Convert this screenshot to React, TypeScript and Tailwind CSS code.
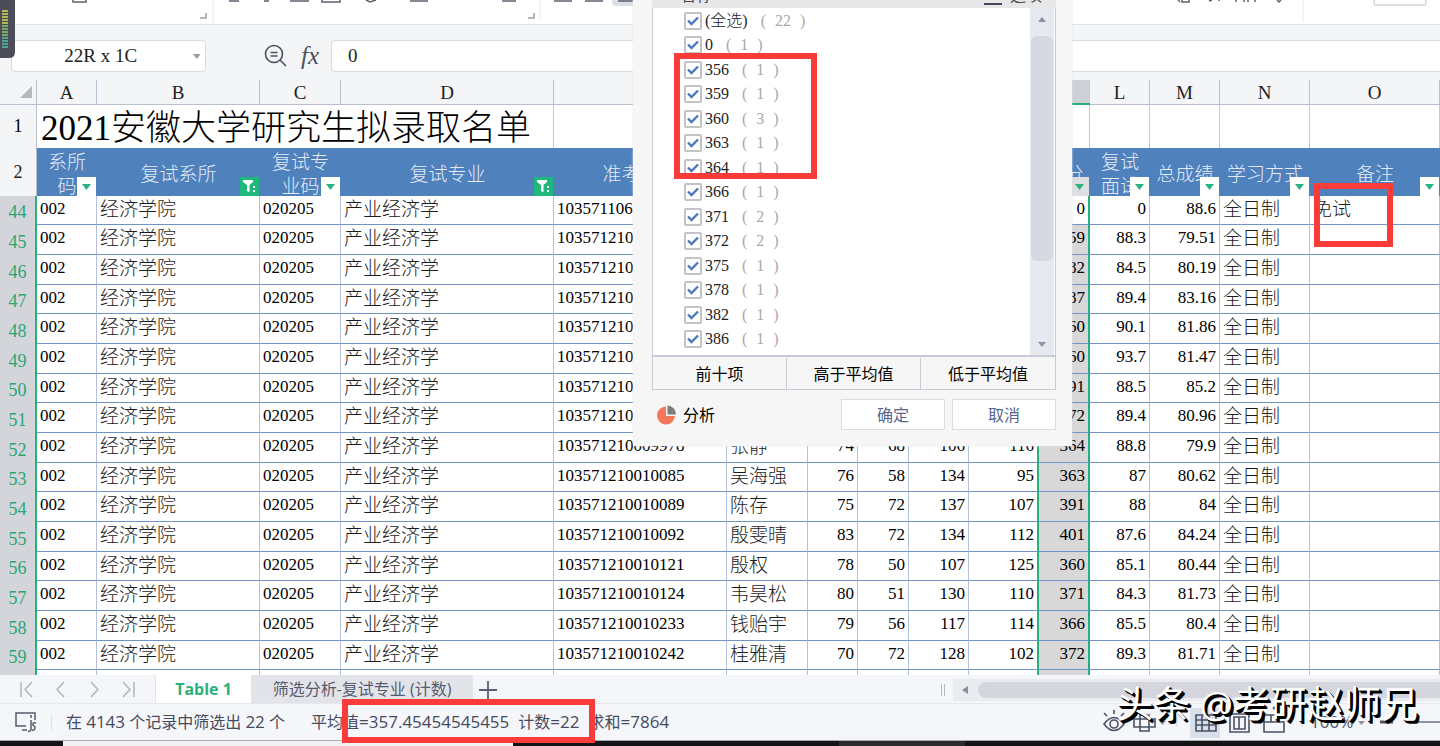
import type { ReactNode } from 'react';
import clsx from 'clsx';

type Column = {
  letter: string;
  width: string;
  title?: string[];
  filter?: 'plain' | 'active';
};

const columns: Column[] = [
  { letter: 'A', width: 'w-[60px]', title: ['系所', '码'], filter: 'plain' },
  { letter: 'B', width: 'w-[163px]', title: ['复试系所'], filter: 'active' },
  { letter: 'C', width: 'w-[81px]', title: ['复试专', '业码'], filter: 'plain' },
  { letter: 'D', width: 'w-[213px]', title: ['复试专业'], filter: 'active' },
  { letter: 'E', width: 'w-[173px]', title: ['准考证号'] },
  { letter: 'F', width: 'w-[81px]' },
  { letter: 'G', width: 'w-[50px]' },
  { letter: 'H', width: 'w-[51px]' },
  { letter: 'I', width: 'w-[60px]' },
  { letter: 'J', width: 'w-[70px]' },
  { letter: 'K', width: 'w-[51px]', title: ['总分'], filter: 'plain' },
  { letter: 'L', width: 'w-[60px]', title: ['复试', '面试'], filter: 'plain' },
  { letter: 'M', width: 'w-[70px]', title: ['总成绩'], filter: 'plain' },
  { letter: 'N', width: 'w-[90px]', title: ['学习方式'], filter: 'plain' },
  { letter: 'O', width: '', title: ['备注'], filter: 'plain' },
];

// row, exam id, name, four papers, total, interview, final score
const records = [
  [44, '103571106', '', '', '', '', '', '0', '0', '88.6'],
  [45, '103571210', '', '', '', '', '', '359', '88.3', '79.51'],
  [46, '103571210', '', '', '', '', '', '382', '84.5', '80.19'],
  [47, '103571210', '', '', '', '', '', '387', '89.4', '83.16'],
  [48, '103571210', '', '', '', '', '', '360', '90.1', '81.86'],
  [49, '103571210', '', '', '', '', '', '360', '93.7', '81.47'],
  [50, '103571210', '', '', '', '', '', '391', '88.5', '85.2'],
  [51, '103571210', '', '', '', '', '', '372', '89.4', '80.96'],
  [52, '103571210009978', '张静', '74', '68', '106', '116', '364', '88.8', '79.9'],
  [53, '103571210010085', '吴海强', '76', '58', '134', '95', '363', '87', '80.62'],
  [54, '103571210010089', '陈存', '75', '72', '137', '107', '391', '88', '84'],
  [55, '103571210010092', '殷雯晴', '83', '72', '134', '112', '401', '87.6', '84.24'],
  [56, '103571210010121', '殷权', '78', '50', '107', '125', '360', '85.1', '80.44'],
  [57, '103571210010124', '韦昊松', '80', '51', '130', '110', '371', '84.3', '81.73'],
  [58, '103571210010233', '钱贻宇', '79', '56', '117', '114', '366', '85.5', '80.4'],
  [59, '103571210010242', '桂雅清', '70', '72', '128', '102', '372', '89.3', '81.71'],
];

const filterItems = [
  ['(全选)', 22],
  ['0', 1],
  ['356', 1],
  ['359', 1],
  ['360', 3],
  ['363', 1],
  ['364', 1],
  ['366', 1],
  ['371', 2],
  ['372', 2],
  ['375', 1],
  ['378', 1],
  ['382', 1],
  ['386', 1],
] as const;

function Ribbon() {
  return (
    <div className="h-[25px] border-b border-[#e2e3e6] bg-white">
      <svg width="1440" height="24" fill="none" stroke="#5d6170" strokeWidth="1.5" aria-hidden="true">
        <path d="M73 0v2h13V0M229 1h10M264 1h5M290 1h19M322 0v2h18V0M366 0l4 2 6-2M410 1h18M502 1h14M554 1h18M585 1h18" />
        <path d="M206 13v5h-6M534 13v5h-6" stroke="#a0a3ad" />
        <path d="M213 0v24M540 0v20M1303 0v22" stroke="#e9eaed" strokeWidth="1" />
        <path d="M612 0h24v6h-20q-4 0-4-4z" fill="#dcdfe8" stroke="none" />
        <path d="M618 1h16" />
        <path d="M1178 0l2 2M1182 0v2h7V0M1209 1l3-1M1219 0v1M1236 0v2M1244 0v2M1248 0v2M1255 0v2M1277 0l2 2 2-2" />
        <path d="M1374 0v3q0 2 2 2h48q2 0 2-2V0" stroke="#dddfe3" strokeWidth="2" />
      </svg>
    </div>
  );
}

function FormulaBar() {
  return (
    <div className="flex h-[55px] items-start bg-[#f4f5f7] pt-[15px] pl-[11px] font-['Liberation_Serif','Noto_Sans_CJK_SC',serif]">
      <div className="flex h-8 w-[195px] items-center rounded-sm border border-[#d8dae0] bg-white pr-1">
        <input
          aria-label="名称框"
          defaultValue="22R x 1C"
          className="w-full min-w-0 bg-transparent pr-1 text-center text-[19px] leading-6 text-[#222] outline-none"
        />
        <svg width="8" height="5" viewBox="0 0 8 5" aria-hidden="true">
          <path d="M0 0h8L4 5z" fill="#9a9da8" />
        </svg>
      </div>
      <button aria-label="查找" className="mt-1 ml-[58px]">
        <svg width="24" height="24" viewBox="0 0 24 24" fill="none" stroke="#4c5060" strokeWidth="1.6">
          <circle cx="10" cy="10" r="8.5" />
          <path d="M16 16l6 6M6.500 8.500h7M6.500 12h7" />
        </svg>
      </button>
      <button aria-label="插入函数" className="ml-2 w-7 text-[25px] leading-8 text-[#4c5060] italic">
        fx
      </button>
      <input
        aria-label="编辑栏"
        defaultValue="0"
        className="ml-[7px] h-8 min-w-0 flex-1 rounded-l-sm border border-r-0 border-[#d8dae0] bg-white pl-4 text-[19px] text-[#222] outline-none"
      />
    </div>
  );
}

function FilterButton({ kind, column }: { kind: 'plain' | 'active'; column: string }) {
  return (
    <button
      aria-label={`筛选 ${column}`}
      className={clsx(
        'absolute right-px bottom-0 grid size-[19px] place-items-center',
        kind === 'active' ? 'bg-[#1fb87b]' : column === 'K' ? 'bg-[#dedfe2]' : 'bg-white'
      )}
    >
      {kind === 'active' ? (
        <svg width="15" height="13" viewBox="0 0 15 13" fill="#fff">
          <path d="M1 0h10v2L7.500 5v7.500L5 11V5L1 2z" />
          <path d="M11 6h2v2h-2zM11 10h2v2h-2z" />
        </svg>
      ) : (
        <svg width="9" height="6" viewBox="0 0 9 6" fill="#2ab37d">
          <path d="M0 0h9L4.500 6z" />
        </svg>
      )}
    </button>
  );
}

function Cell({ children, zh, right, className }: { children?: ReactNode; zh?: boolean; right?: boolean; className?: string }) {
  return (
    <td
      className={clsx(
        'overflow-hidden border-b border-b-[#6f93c4] px-[3px] align-top whitespace-nowrap',
        zh ? 'text-[19px] leading-7 font-light text-[#1c1c1c]' : 'text-[17px] leading-[25px]',
        right && 'text-right',
        className ?? 'border-r border-r-[#b4c0dc]'
      )}
    >
      {children}
    </td>
  );
}

function Sheet() {
  return (
    <table className="w-full table-fixed border-separate border-spacing-0 bg-white font-['Liberation_Serif','Noto_Sans_CJK_SC',serif] text-black">
      <colgroup>
        <col className="w-[37px]" />
        {columns.map((c) => (
          <col key={c.letter} className={c.width} />
        ))}
      </colgroup>
      <thead>
        <tr className="h-[25px] bg-[#f4f5f7] text-[19px] leading-[22px] text-[#222]">
          <th className="border-r border-b border-[#b9bfce] p-0">
            <svg className="mr-1 ml-auto" width="12" height="12" aria-label="全选">
              <path d="M12 0v12H0z" fill="#b7b9bd" />
            </svg>
          </th>
          {columns.map((c) => (
            <th
              key={c.letter}
              scope="col"
              className={clsx(
                'p-0 pt-px font-normal',
                c.letter === 'K' ? 'border-b-2 border-[#27b07a] bg-[#cdd0d6]' : 'border-r border-b border-[#b9bfce]'
              )}
            >
              {c.letter}
            </th>
          ))}
        </tr>
      </thead>
      <tbody>
        <tr className="h-[43px]">
          <th scope="row" className="border-r border-[#b9bfce] bg-[#f4f5f7] p-0 text-[18px] font-normal">
            1
          </th>
          <td
            colSpan={4}
            className="border-r border-[#c3cad9] pt-1 pl-1 text-[35px] leading-[38px] font-light whitespace-nowrap"
          >
            2021安徽大学研究生拟录取名单
          </td>
          {columns.slice(4).map((c) => (
            <td key={c.letter} className="border-r border-[#c3c8de]" />
          ))}
        </tr>
        <tr className="h-12 bg-[#4f81bd] text-[19px] leading-6 text-[#e3ebf7]">
          <th scope="row" className="border-r border-[#b9bfce] bg-[#f4f5f7] p-0 text-[18px] font-normal text-[#222]">
            2
          </th>
          {columns.map((c) => (
            <th key={c.letter} className="relative p-0 font-light whitespace-nowrap">
              <div className={clsx('h-12', c.title && c.title.length > 1 ? 'pt-[3px]' : 'pt-[15px]')}>
                {c.title?.map((line) => (
                  <div key={line}>{line}</div>
                ))}
              </div>
              {c.filter && <FilterButton kind={c.filter} column={c.letter} />}
            </th>
          ))}
        </tr>
        {records.map(([row, id, name, p1, p2, p3, p4, total, interview, final], i) => (
          <tr key={row} className={i % 3 === 0 ? 'h-[29px]' : 'h-[30px]'}>
            <th
              scope="row"
              className="border-r-2 border-[#27b07a] bg-[#d3d5da] p-0 align-bottom text-[18px] leading-[25px] font-normal text-[#2ba575]"
            >
              {row}
            </th>
            <Cell>002</Cell>
            <Cell zh>经济学院</Cell>
            <Cell>020205</Cell>
            <Cell zh>产业经济学</Cell>
            <Cell>{id}</Cell>
            <Cell zh>{name}</Cell>
            <Cell right>{p1}</Cell>
            <Cell right>{p2}</Cell>
            <Cell right>{p3}</Cell>
            <Cell right className="border-r-2 border-r-[#27b07a]">{p4}</Cell>
            <Cell right className={clsx('border-r-2 border-r-[#27b07a]', i > 0 && 'bg-[#d8d8d9]')}>{total}</Cell>
            <Cell right>{interview}</Cell>
            <Cell right>{final}</Cell>
            <Cell zh>全日制</Cell>
            <Cell zh>{i === 0 && '免试'}</Cell>
          </tr>
        ))}
        <tr className="h-[5px]">
          <th className="border-r-2 border-[#27b07a] bg-[#d3d5da] p-0" />
          {columns.map((c) => (
            <td
              key={c.letter}
              className={clsx(
                'p-0',
                c.letter === 'J' || c.letter === 'K' ? 'border-r-2 border-[#27b07a]' : 'border-r border-[#b4c0dc]',
                c.letter === 'K' && 'bg-[#d8d8d9]'
              )}
            />
          ))}
        </tr>
      </tbody>
    </table>
  );
}

function FilterPanel() {
  return (
    <section className="absolute top-0 left-[633px] w-[439px] bg-[#f6f6f6] pr-4 pb-4 pl-[19px] font-['Open_Sans','Noto_Sans_CJK_SC',sans-serif] shadow-[0_0_2px_#e4e4e8]">
      <div className="flex h-2 items-end justify-between overflow-hidden bg-[#e7e7e8] pr-[14px] pb-[3px] pl-7 text-base leading-5 text-[#444858]">
        <span>名称</span>
        <span className="flex items-end gap-2">
          <svg width="18" height="12" stroke="currentColor" strokeWidth="2" aria-hidden="true">
            <path d="M0 5h18M0 11h18" />
          </svg>
          选项
        </span>
      </div>
      <div className="flex h-[349px] border-x border-b-2 border-[#c8cbd5] bg-white">
        <ul className="flex-1 pt-px pl-[31px] font-['Liberation_Serif','Noto_Sans_CJK_SC',serif] text-base text-[#222]">
          {filterItems.map(([label, count]) => (
            <li key={label} className="h-6 even:h-[25px]">
              <label className="flex h-6 items-center">
                <span className="grid size-[18px] place-items-center">
                  <input
                    type="checkbox"
                    defaultChecked
                    className="col-start-1 row-start-1 size-[18px] appearance-none rounded-xs border-2 border-[#c4c4c6] bg-white"
                  />
                  <svg className="pointer-events-none col-start-1 row-start-1" width="12" height="10" viewBox="0 0 12 10" fill="none" stroke="#4a78c0" strokeWidth="2.4" aria-hidden="true">
                    <path d="M1 4.500l3.500 3.500L11 1.500" />
                  </svg>
                </span>
                <span className="ml-[3px] font-light">{label}</span>
                <span className="ml-[13px] flex gap-[9px] text-[#a9a9ad]">
                  <span>(</span>
                  <span>{count}</span>
                  <span>)</span>
                </span>
              </label>
            </li>
          ))}
        </ul>
        <div className="mr-px flex w-6 flex-col items-center bg-[#e7e9f0] pt-[9px] pb-2">
          <svg width="8" height="5" className="mb-[14px]" aria-hidden="true">
            <path d="M0 5h8L4 0z" fill="#8e92a1" />
          </svg>
          <div className="h-[225px] w-[22px] rounded-md bg-[#d6d9e2]" />
          <svg width="8" height="5" className="mt-auto" aria-hidden="true">
            <path d="M0 0h8L4 5z" fill="#8e92a1" />
          </svg>
        </div>
      </div>
      <div className="grid h-[33px] grid-cols-3 divide-x divide-[#c8cbd5] border border-t-0 border-[#c8cbd5] pt-px text-base text-black">
        <button>前十项</button>
        <button>高于平均值</button>
        <button>低于平均值</button>
      </div>
      <div className="mt-[9px] flex items-center text-base">
        <button className="flex items-center gap-[6px] pl-[5px] text-black">
          <svg width="20" height="20" viewBox="0 0 20 20" aria-hidden="true">
            <path d="M9 1.500A9 9 0 1 0 18 11H9z" fill="#f4775c" />
            <path d="M10.500 0.500a9 9 0 0 1 8.500 9h-8.500z" fill="#7d7d7b" />
          </svg>
          分析
        </button>
        <button className="ml-auto h-[31px] w-[104px] border border-[#dcdde1] bg-white text-[#56668c]">确定</button>
        <button className="ml-[7px] h-[31px] w-[104px] border border-[#dcdde1] bg-white text-[#56668c]">取消</button>
      </div>
    </section>
  );
}

function SheetTabs() {
  const arrows = ['M2 1v15M13 1L6 8.500l7 7.500', 'M11 1L4 8.500l7 7.500', 'M4 1l7 7.500L4 16', 'M2 1l7 7.500L2 16M13 1v15'];
  const names = ['第一张', '上一张', '下一张', '最后一张'];
  return (
    <div className="flex h-[29px] items-start border-b border-[#e6e8ee] bg-[#f5f6f9] text-base text-[#555b70]">
      <nav className="flex h-7 w-[155px] items-center gap-[19px] pl-[19px]">
        {arrows.map((d, i) => (
          <button key={d} aria-label={names[i]}>
            <svg width="15" height="17" fill="none" stroke="#b2b5bf" strokeWidth="1.5">
              <path d={d} />
            </svg>
          </button>
        ))}
      </nav>
      <button className="h-7 w-24 border-l border-[#e3e4e8] bg-white font-bold text-[#2bb07c]">Table 1</button>
      <button className="h-7 w-[222px] bg-[#e3e4ea] whitespace-nowrap">筛选分析-复试专业 (计数)</button>
      <button aria-label="新建工作表" className="mt-[6px] ml-[6px]">
        <svg width="18" height="18" stroke="#5a6074" strokeWidth="1.800">
          <path d="M9 0v18M0 9h18" />
        </svg>
      </button>
      <div className="mt-1 ml-auto flex h-[22px] w-[499px] items-center">
        <div className="mr-2 h-3 w-1 border-x border-[#b7bac4]" />
        <div className="flex h-full flex-1 items-center bg-[#eaebef]">
          <svg className="mx-[9px]" width="7" height="8" aria-hidden="true">
            <path d="M6 0v8L0 4z" fill="#8c8fa0" />
          </svg>
          <div className="h-4 flex-1 rounded-l-lg bg-[#d4d5dd]" />
        </div>
      </div>
    </div>
  );
}

function Num({ children }: { children: ReactNode }) {
  return <span className="text-[17px]">{children}</span>;
}

function StatusBar() {
  return (
    <footer className="flex h-9 items-center bg-[#f5f6f9] pl-[15px] text-base whitespace-nowrap text-[#454b5e]">
      <svg width="22" height="22" viewBox="0 0 22 22" fill="none" stroke="#555b6d" strokeWidth="1.500" aria-hidden="true">
        <path d="M11 15H1V2h19v4M7 19h5M16 9v9q0 3-3 2M21 12q-4-1-3 2l2 2q0 4-3 3M16 7V4M20 5v4" />
      </svg>
      <div className="ml-[14px] h-4 w-px bg-[#dfe1e6]" />
      <span className="ml-[14px]">
        在 <Num>4143</Num> 个记录中筛选出 <Num>22</Num> 个
      </span>
      <div className="ml-[26px] flex items-center gap-[9px]">
        <span>
          平均值<Num>=357.45454545455</Num>
        </span>
        <span>
          计数<Num>=22</Num>
        </span>
        <span>
          求和<Num>=7864</Num>
        </span>
      </div>
      <div className="ml-auto flex h-full shrink-0 items-center text-[#4b5165]">
        <svg width="207" height="36" fill="none" stroke="currentColor" strokeWidth="1.600" aria-hidden="true">
          <path d="M87 4h30v30H87z" fill="#dae0e9" stroke="none" />
          <path d="M1 20q10-13 20 0q-10 13-20 0zM1 9l3 3M11 6v4M21 9l-3 3" />
          <circle cx="11" cy="20" r="4" />
          <path d="M31 15h21v8H31zM37 11h9v16h-9zM37 15v8M46 15v8" />
          <path d="M56 17h7l-3.500 4z" fill="#8c91a0" stroke="none" />
          <path d="M93 11h20v16H93zM93 16h20M93 21h20M99 11v16M106 11v16" />
          <path d="M127 10h19v18h-19zM131 13h11v12h-11zM136 13v12" />
          <path d="M161 11v17h20V18h-6v-7h-14M161 18h14M168 11v7" />
          <path d="M74 13v10M199 13v10" stroke="#dfe1e6" />
        </svg>
        <span className="w-[43px] text-[17px]">100%</span>
        <svg width="87" height="36" fill="none" stroke="currentColor" strokeWidth="1.600" aria-hidden="true">
          <path d="M5 17h7l-3.500 4z" fill="#8c91a0" stroke="none" />
          <path d="M27 18h13" strokeWidth="3" />
          <path d="M57 18h30" strokeWidth="1.200" />
        </svg>
      </div>
    </footer>
  );
}

export default function App() {
  return (
    <main className="relative flex min-h-screen flex-col overflow-hidden bg-[#141416] font-['Open_Sans','Noto_Sans_CJK_SC',sans-serif]">
      <Ribbon />
      <FormulaBar />
      <Sheet />
      <SheetTabs />
      <StatusBar />
      <div className="flex flex-1 border-t border-[#a9abb0]">
        <div className="w-[63px]" />
        <div className="w-[450px] bg-[#f1f1f2]" />
        <div className="ml-[326px] w-[126px] bg-[#2b2b2d]" />
      </div>

      <FilterPanel />

      {/* level meter peeking in from the left edge */}
      <svg className="absolute top-0 left-0" width="15" height="58" aria-hidden="true">
        <path d="M0 0h15v52q0 6-6 6H0z" fill="#4b4d59" />
        <path d="M2 10h6v14H2z" fill="#b5b552" />
        <path d="M2 24h6v12H2z" fill="#79ad68" />
        <path d="M2 36h6v13H2z" fill="#4fa58d" />
        <path d="M5 9v40" stroke="#4b4d59" strokeWidth="6" strokeDasharray="1 2" />
      </svg>

      {/* red annotations */}
      <div className="pointer-events-none absolute top-[53px] left-[674px] h-[126px] w-[143px] border-6 border-[#f93b3a]" />
      <div className="pointer-events-none absolute top-[183px] left-[1314px] h-[64px] w-[79px] border-6 border-[#f93b3a]" />
      <div className="pointer-events-none absolute top-[699px] left-[342px] h-[44px] w-[253px] border-6 border-[#f93b3a]" />

      <p className="pointer-events-none absolute right-[22px] bottom-[18px] text-[37px] leading-[48px] whitespace-nowrap text-white [text-shadow:3px_3px_0_#000,2px_2px_0_#000,1px_1px_0_#000]">
        头条 @考研赵师兄
      </p>
    </main>
  );
}
